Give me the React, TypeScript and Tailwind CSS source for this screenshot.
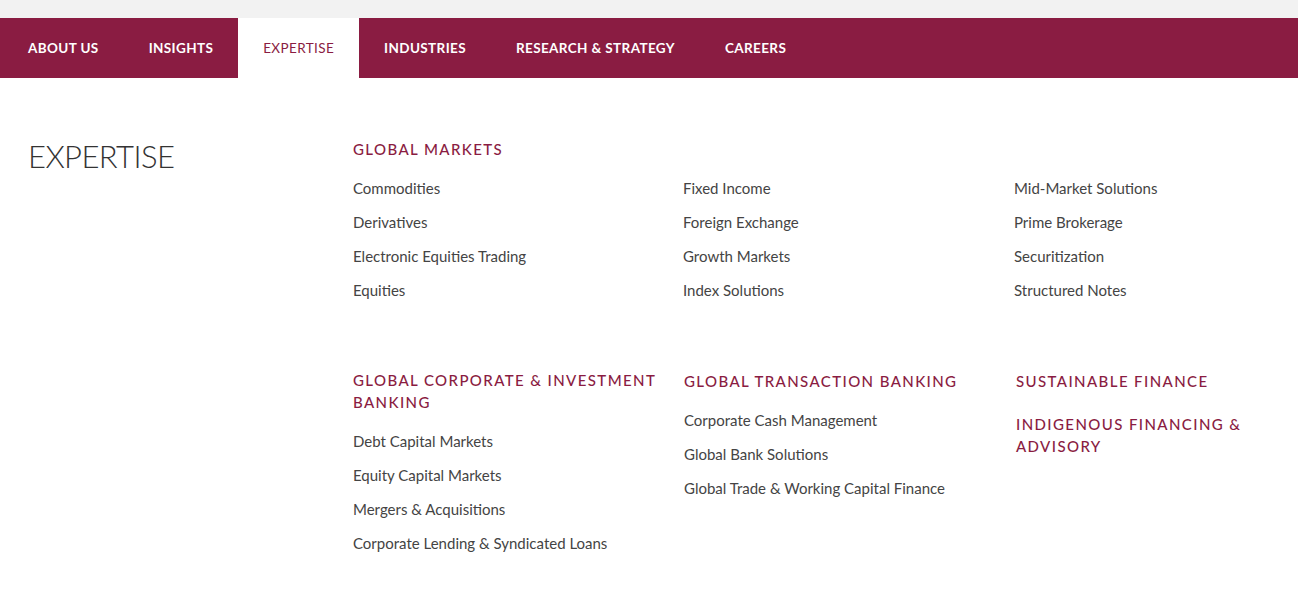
import React from "react";

const font = { fontFamily: "Lato, 'Open Sans', sans-serif" };

const nav = ["ABOUT US", "INSIGHTS", "EXPERTISE", "INDUSTRIES", "RESEARCH & STRATEGY", "CAREERS"];

function Heading({ children }: { children: React.ReactNode }) {
  return (
    <h3 className="text-[15px] leading-[22px] tracking-[1.4px] text-[#8a1c42] font-medium uppercase">
      {children}
    </h3>
  );
}

function Item({ children }: { children: React.ReactNode }) {
  return <li className="text-[15px] leading-[20px] text-[#444] h-[34px]">{children}</li>;
}

export default function App() {
  return (
    <div className="w-[1298px] h-[612px] bg-white" style={font}>
      <div className="h-[18px] bg-[#f2f2f2]" />
      <nav className="h-[60px] bg-[#8a1c42] flex pl-[3px]">
        {nav.map((n) => (
          <a
            key={n}
            className={
              n === "EXPERTISE"
                ? "px-[25px] flex items-center bg-white text-[#8a1c42] text-[13.5px] tracking-[0.38px]"
                : "px-[25px] flex items-center text-white text-[13.5px] font-bold tracking-[0.38px]"
            }
          >
            {n}
          </a>
        ))}
      </nav>
      <div className="flex pt-[59px]">
        <div className="w-[353px] pl-[28px] shrink-0">
          <h2 className="text-[31px] leading-[40px] font-light tracking-[-0.6px] text-[#333] -mt-[1px]">EXPERTISE</h2>
        </div>
        <div className="flex-1">
          <div className="pt-[1px]">
            <Heading>GLOBAL MARKETS</Heading>
          </div>
          <div className="grid grid-cols-[330px_331px_1fr] mt-[18px]">
            <ul>
              <Item>Commodities</Item>
              <Item>Derivatives</Item>
              <Item>Electronic Equities Trading</Item>
              <Item>Equities</Item>
            </ul>
            <ul>
              <Item>Fixed Income</Item>
              <Item>Foreign Exchange</Item>
              <Item>Growth Markets</Item>
              <Item>Index Solutions</Item>
            </ul>
            <ul>
              <Item>Mid-Market Solutions</Item>
              <Item>Prime Brokerage</Item>
              <Item>Securitization</Item>
              <Item>Structured Notes</Item>
            </ul>
          </div>
          <div className="grid grid-cols-[330px_331px_1fr] mt-[55px]">
            <div>
              <Heading>GLOBAL CORPORATE &amp; INVESTMENT BANKING</Heading>
              <ul className="mt-[18px]">
                <Item>Debt Capital Markets</Item>
                <Item>Equity Capital Markets</Item>
                <Item>Mergers &amp; Acquisitions</Item>
                <Item>Corporate Lending &amp; Syndicated Loans</Item>
              </ul>
            </div>
            <div className="pl-[1px] pt-[1px]">
              <Heading>GLOBAL TRANSACTION BANKING</Heading>
              <ul className="mt-[18px]">
                <Item>Corporate Cash Management</Item>
                <Item>Global Bank Solutions</Item>
                <Item>Global Trade &amp; Working Capital Finance</Item>
              </ul>
            </div>
            <div className="pl-[2px] pt-[1px] pr-[40px]">
              <Heading>SUSTAINABLE FINANCE</Heading>
              <div className="mt-[21px]">
                <Heading>INDIGENOUS FINANCING &amp; ADVISORY</Heading>
              </div>
            </div>
          </div>
        </div>
      </div>
    </div>
  );
}
